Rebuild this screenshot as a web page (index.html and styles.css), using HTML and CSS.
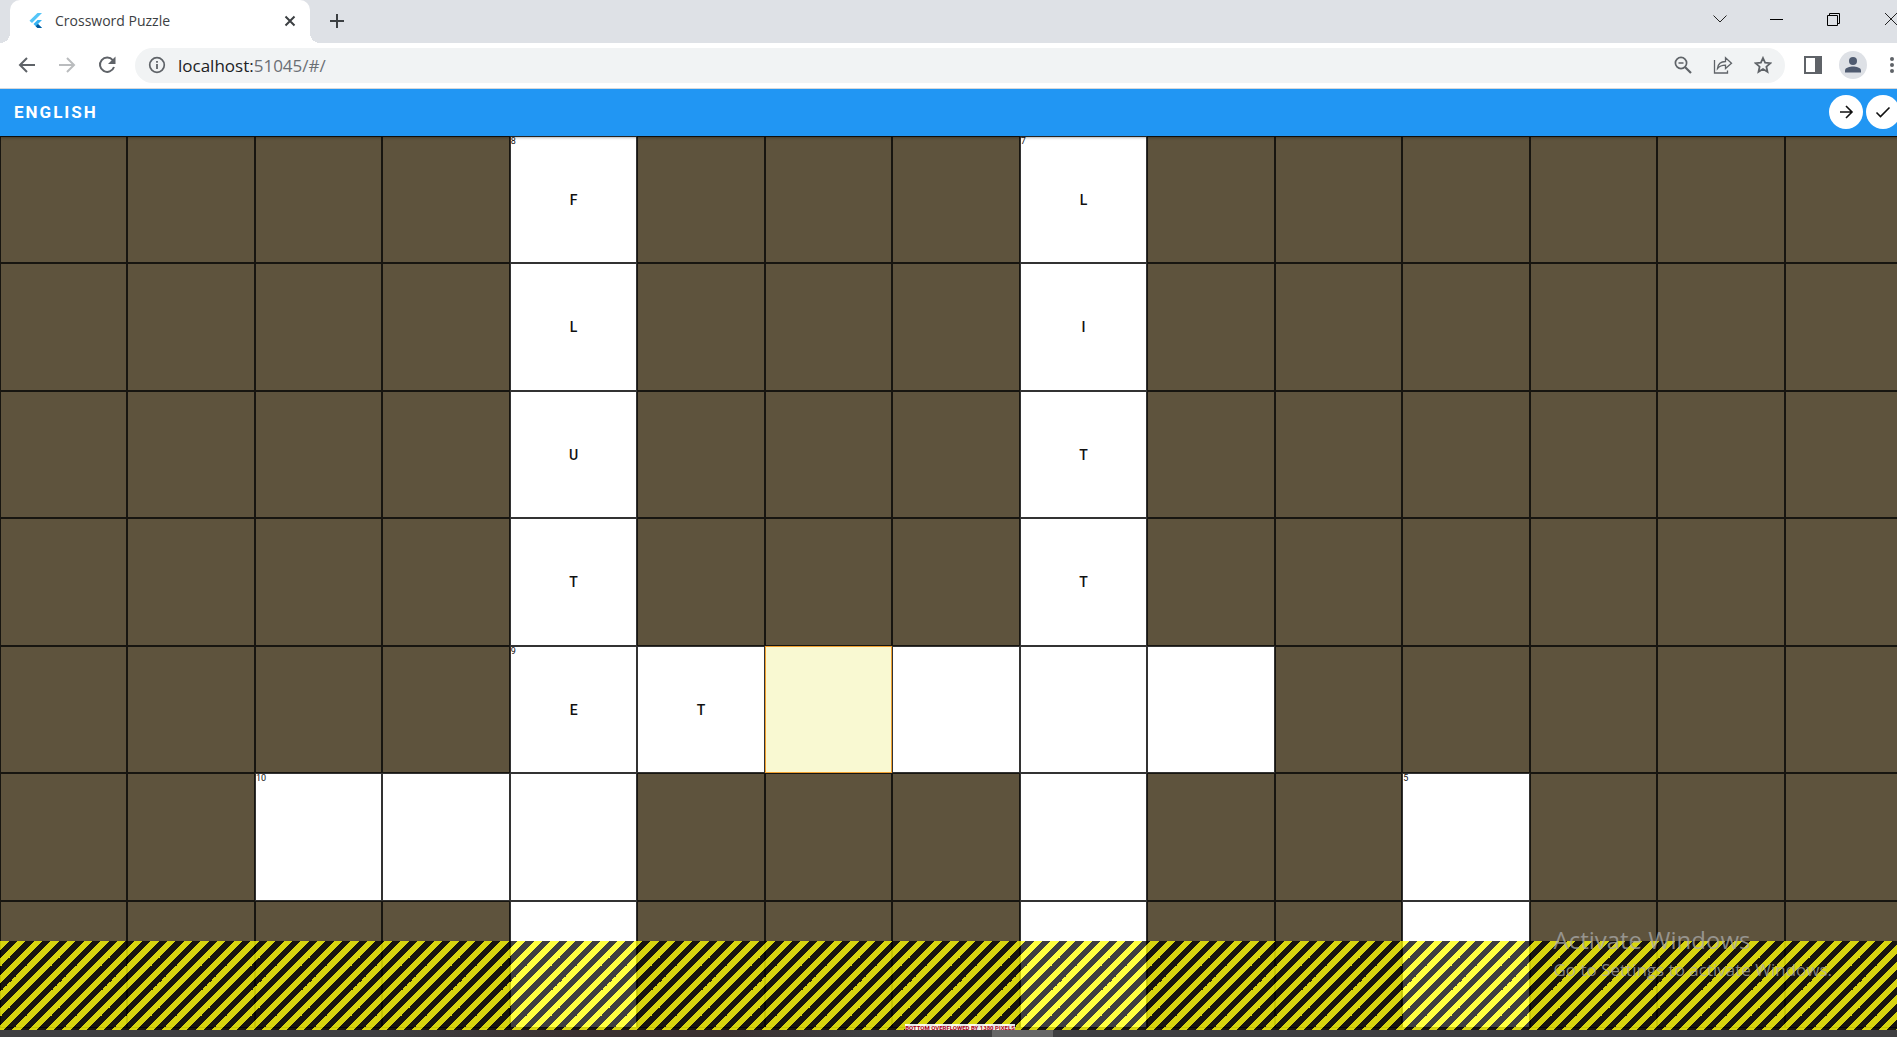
FILE: index.html
```html
<!DOCTYPE html>
<html lang="en">
<head>
<meta charset="utf-8">
<title>Crossword Puzzle</title>
<link rel="stylesheet" href="styles.css">
</head>
<body>
<div class="window">
  <header class="tabstrip">
    <div class="tab">
      <svg class="favicon" viewBox="0 0 16 16" width="16" height="16" aria-hidden="true">
        <path d="M9.500 0H14L4 10L1.500 7.700z" fill="#54c5f8"/>
        <path d="M9.500 7H14L10 11L14 15H9.500L5.500 11z" fill="#35b3f3"/>
        <path d="M7.700 13.300L10 11L14 15H9.500z" fill="#01579b"/>
      </svg>
      <span class="tab-title">Crossword Puzzle</span>
      <button class="icon-btn tab-close" aria-label="Close tab"><svg viewBox="0 0 12 12" width="12" height="12"><path d="M1.500 1.500L10.500 10.500M10.500 1.500L1.500 10.500" stroke="#3c4043" stroke-width="2" fill="none"/></svg></button>
    </div>
    <button class="icon-btn new-tab" aria-label="New tab"><svg viewBox="0 0 16 16" width="16" height="16"><path d="M8 1V15M1 8H15" stroke="#3c4043" stroke-width="2" fill="none"/></svg></button>
    <div class="window-controls">
      <button class="icon-btn" aria-label="Search tabs"><svg viewBox="0 0 14 14" width="14" height="14"><path d="M.5 3.500L7 10L13.500 3.500" stroke="#222" fill="none"/></svg></button>
      <button class="icon-btn" aria-label="Minimize"><svg viewBox="0 0 14 14" width="14" height="14"><path d="M0 7.500H13" stroke="#000" fill="none"/></svg></button>
      <button class="icon-btn" aria-label="Restore"><svg viewBox="0 0 14 14" width="14" height="14"><path d="M.5 3.500H10.500V13.500H.5zM2.500 3.500V1.500H12.500V11.500H10.500" stroke="#000" fill="none"/></svg></button>
      <button class="icon-btn" aria-label="Close"><svg viewBox="0 0 14 14" width="14" height="14"><path d="M1 1L13 13M13 1L1 13" stroke="#222" fill="none"/></svg></button>
    </div>
  </header>
  <nav class="toolbar" aria-label="Browser toolbar">
    <button class="icon-btn" aria-label="Back"><svg viewBox="0 0 20 20" width="20" height="20"><path d="M18 10H3M10 3L3 10L10 17" stroke="#5f6368" stroke-width="2" fill="none"/></svg></button>
    <button class="icon-btn" aria-label="Forward"><svg viewBox="0 0 20 20" width="20" height="20"><path d="M2 10H17M10 3L17 10L10 17" stroke="#babcbe" stroke-width="2" fill="none"/></svg></button>
    <button class="icon-btn" aria-label="Reload"><svg viewBox="0 0 20 20" width="20" height="20"><path d="M15.800 5.200A7.200 7.200 0 1 0 17 12" stroke="#5f6368" stroke-width="2" fill="none"/><path d="M18.500 1.500V9H11z" fill="#5f6368"/></svg></button>
    <div class="omnibox">
      <svg viewBox="0 0 18 18" width="18" height="18" aria-hidden="true"><circle cx="9" cy="9" r="7.300" stroke="#5f6368" stroke-width="1.700" fill="none"/><path d="M9 8V13M9 5V6.800" stroke="#5f6368" stroke-width="1.800"/></svg>
      <a class="url" href="#/">localhost:<span class="url-rest">51045/#/</span></a>
      <button class="icon-btn" aria-label="Zoom"><svg viewBox="0 0 18 18" width="18" height="18"><path d="M11.200 11.200L17 17" stroke="#5f6368" stroke-width="2.200"/><circle cx="7" cy="7" r="5.600" stroke="#5f6368" stroke-width="1.700" fill="none"/><path d="M4.500 7H9.500" stroke="#5f6368" stroke-width="1.500"/></svg></button>
      <button class="icon-btn" aria-label="Share"><svg viewBox="0 0 20 18" width="20" height="18"><path d="M1.500 4V17H14.500V14.500M4.500 12.500C5 8 8 5.500 12.500 5.500V1.800L18.500 7.200L12.500 12.500V9.200C8.500 9.200 6.500 10 4.500 12.500z" stroke="#5f6368" stroke-width="1.300" fill="none"/></svg></button>
      <button class="icon-btn" aria-label="Bookmark"><svg viewBox="0 0 18 18" width="18" height="18"><path d="M9 2L11.100 6.700L16.300 7.200L12.400 10.700L13.500 15.800L9 13.100L4.500 15.800L5.600 10.700L1.700 7.200L6.900 6.700z" stroke="#5f6368" stroke-width="1.800" fill="none"/></svg></button>
    </div>
    <div class="profile-tools">
      <button class="icon-btn" aria-label="Side panel"><svg viewBox="0 0 18 18" width="18" height="18"><path d="M0 0H18V18H0zM2 2V16H11V2z" fill="#5f6368" fill-rule="evenodd"/></svg></button>
      <button class="icon-btn" aria-label="Profile"><svg viewBox="0 0 28 28" width="28" height="28"><circle cx="14" cy="14" r="14" fill="#dee1e6"/><circle cx="14" cy="10" r="4" fill="#4f5b70"/><path d="M6 21.500V19.500C6 16.500 11 15.500 14 15.500S22 16.500 22 19.500V21.500z" fill="#4f5b70"/></svg></button>
      <button class="icon-btn menu-btn" aria-label="Menu"><svg viewBox="0 0 6 18" width="6" height="18"><g fill="#5f6368"><circle cx="3" cy="3" r="2"/><circle cx="3" cy="9" r="2"/><circle cx="3" cy="15" r="2"/></g></svg></button>
    </div>
  </nav>
  <main class="app">
    <header class="appbar">
      <h1>ENGLISH</h1>
      <button class="round-btn" aria-label="Next"><svg viewBox="0 0 20 20" width="20" height="20"><path d="M4 10H16M10 4L16 10L10 16" stroke="#111" stroke-width="1.600" fill="none"/></svg></button>
      <button class="round-btn" aria-label="Check"><svg viewBox="0 0 20 20" width="20" height="20"><path d="M3.500 10.500L7.500 14.500L16.500 5.500" stroke="#111" stroke-width="1.600" fill="none"/></svg></button>
    </header>
    <div class="board" id="board"></div>
    <div class="overflow-band"><span>BOTTOM OVERFLOWED BY 1380 PIXELS</span></div>
  </main>
  <aside class="watermark"><strong>Activate Windows</strong><span>Go to Settings to activate Windows.</span></aside>
  <footer class="taskbar"><div class="task-active"></div></footer>
</div>
<script src="board.js"></script>
</body>
</html>
```
FILE: board.js
```js
// '#' is a blocked square, '_' an empty one, '*' the selected one.
const rows = [
  '####F###L######',
  '####L###I######',
  '####U###T######',
  '####T###T######',
  '####ET*___#####',
  '##___###_##_###',
  '####_###_##_###'
];
const clues = { '0,4': 8, '0,8': 7, '4,4': 9, '5,2': 10, '5,11': 5 };
const board = document.getElementById('board');
rows.forEach((row, r) => [...row].forEach((mark, c) => {
  const open = mark !== '#';
  const cell = document.createElement(open ? 'button' : 'div');
  cell.className = 'cell' + (open ? ' open' : '') + (mark === '*' ? ' selected' : '');
  if (/[A-Z]/.test(mark)) cell.textContent = mark;
  else if (open) cell.setAttribute('aria-label', 'Empty square');
  const clue = clues[r + ',' + c];
  if (clue) {
    const tag = document.createElement('span');
    tag.className = 'clue';
    tag.textContent = clue;
    cell.append(tag);
  }
  board.append(cell);
}));
```
FILE: styles.css
```css
* { box-sizing: border-box; }
html, body { height: 100%; }
body {
  margin: 0;
  overflow: hidden;
  font-family: "Open Sans", "Noto Sans", sans-serif;
}
/* A maximised window runs a little past the right edge of the screen. */
.window {
  position: relative;
  display: flex;
  flex-direction: column;
  width: calc(100% + 15px);
  height: 100%;
}
.icon-btn {
  display: flex;
  align-items: center;
  justify-content: center;
  padding: 0;
  border: 0;
  background: none;
}
.tabstrip {
  display: flex;
  flex: none;
  height: 43px;
  padding-left: 10px;
  background: #dee1e6;
}
.tab {
  position: relative;
  display: flex;
  align-items: center;
  width: 300px;
  padding: 0 14px 1px 18px;
  border-radius: 10px 10px 0 0;
  background: #fff;
}
.tab::before, .tab::after {
  content: "";
  position: absolute;
  bottom: 0;
  width: 10px;
  height: 10px;
}
.tab::before { right: 100%; background: radial-gradient(circle at 0 0, #dee1e6 10px, #fff 10px); }
.tab::after { left: 100%; background: radial-gradient(circle at 100% 0, #dee1e6 10px, #fff 10px); }
.tab-title {
  flex: 1;
  margin-left: 11px;
  padding-bottom: 1px;
  color: #3c4043;
  font-size: 14px;
}
.new-tab { width: 34px; margin-left: 10px; padding-bottom: 1px; }
.window-controls {
  display: flex;
  gap: 43px;
  margin-left: auto;
  padding: 0 14px 6px 0;
}
.toolbar {
  display: flex;
  flex: none;
  align-items: center;
  gap: 20px;
  height: 46px;
  padding: 0 18px 1px 17px;
  border-bottom: 1px solid #d5d7da;
  background: #fff;
}
.omnibox {
  display: flex;
  flex: 1;
  align-items: center;
  gap: 21px;
  height: 35px;
  margin-left: -2px;
  padding: 0 13px;
  border-radius: 18px;
  background: #f1f3f4;
}
.url {
  flex: 1;
  margin-left: -9px;
  color: #202124;
  font-size: 17px;
  text-decoration: none;
}
.url-rest { color: #6b6f74; }
.profile-tools { display: flex; align-items: center; gap: 17px; margin: 0 -1px; }
.menu-btn { margin-left: 5px; }
.app {
  position: relative;
  flex: 1;
  min-height: 0;
  overflow: hidden;
  background: #5e533d;
}
.appbar {
  position: relative;
  z-index: 1;
  display: flex;
  align-items: center;
  gap: 3px;
  height: 47px;
  padding: 0 12px 1px 14px;
  background: #2196f3;
  box-shadow: 0 1px 3px rgba(0, 0, 0, .5);
  color: #fff;
  font-family: Roboto, sans-serif;
}
.appbar h1 {
  flex: 1;
  margin: 0;
  font-size: 17px;
  font-weight: 700;
  letter-spacing: 2px;
}
.round-btn {
  display: flex;
  align-items: center;
  justify-content: center;
  width: 34px;
  height: 34px;
  padding: 0;
  border: 0;
  border-radius: 50%;
  background: #fff;
}
.board { display: grid; grid-template-columns: repeat(15, 1fr); }
.cell {
  position: relative;
  aspect-ratio: 1;
  min-width: 0;
  padding: 0;
  border: 1px solid #171510;
  background: #5e533d;
  color: #111;
  font-family: Roboto, sans-serif;
  font-size: 14px;
  font-weight: 500;
}
.open { border-color: #333; background: #fff; }
.selected { border-color: #f0a030; background: #f9f9d2; }
.clue {
  position: absolute;
  top: 0;
  left: 0;
  font-size: 9px;
  font-weight: 400;
  line-height: 9px;
}
/* Each 50px tile holds exactly three stripe pairs, so the tiles join up. */
.overflow-band {
  position: absolute;
  inset: auto 0 0;
  display: flex;
  align-items: flex-end;
  justify-content: center;
  height: 89px;
  padding-left: 8px;
  overflow: hidden;
  background: repeating-linear-gradient(135deg, rgba(255, 255, 0, .75) 0 calc(100% / 12), rgba(0, 0, 0, .75) calc(100% / 12) calc(100% / 6)) 1px 0 / 50px 50px;
}
.overflow-band span {
  height: 6px;
  background: rgba(255, 255, 255, .9);
  color: #b00020;
  font: 700 6px/7px Roboto, sans-serif;
}
.watermark {
  position: absolute;
  right: 80px;
  bottom: 55px;
  display: flex;
  flex-direction: column;
  color: rgba(170, 170, 170, .75);
}
.watermark strong { font-size: 24px; font-weight: 400; line-height: 34px; }
.watermark span { font-size: 17px; line-height: 25px; }
.taskbar {
  display: flex;
  flex: none;
  justify-content: center;
  height: 7px;
  padding-left: 132px;
  background: linear-gradient(90deg, #3f3f41 0 20%, #3b3130 30% 38%, #3f3f41 45%);
}
.task-active { width: 61px; background: #666; }
```
